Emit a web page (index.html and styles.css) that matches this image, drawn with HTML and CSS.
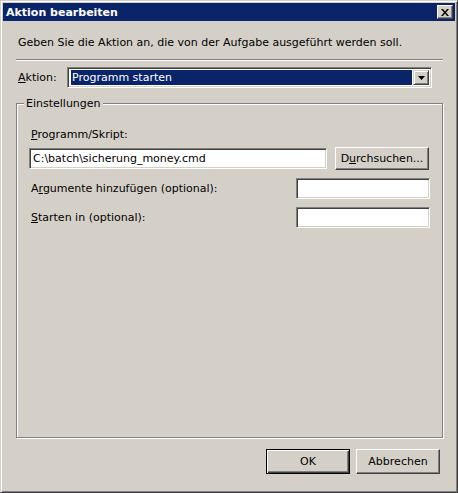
FILE: index.html
```html
<!DOCTYPE html>
<html lang="de">
<head>
    <meta charset="UTF-8">
    <title>Aktion bearbeiten</title>
    <link rel="stylesheet" href="styles.css">
</head>
<body>
    <div class="window">
        <div class="titlebar">
            <span class="title">Aktion bearbeiten</span>
            <button class="close-btn" aria-label="Schließen">
                <svg width="8" height="7" viewBox="0 0 8 7">
                    <path d="M0 0h2l2 2.5L6 0h2L5 3.5 8 7H6L4 4.5 2 7H0l3-3.5z" fill="#000"/>
                </svg>
            </button>
        </div>

        <div class="content">
            <p class="intro">Geben Sie die Aktion an, die von der Aufgabe ausgeführt werden soll.</p>
            <div class="separator"></div>

            <div class="action-row">
                <label class="action-label"><u>A</u>ktion:</label>
                <div class="combo">
                    <div class="combo-value">Programm starten</div>
                    <div class="combo-arrow">
                        <svg width="7" height="4" viewBox="0 0 7 4"><path d="M0 0h7L3.5 4z" fill="#000"/></svg>
                    </div>
                </div>
            </div>

            <div class="group">
                <span class="legend">Einstellungen</span>

                <div class="field-label"><u>P</u>rogramm/Skript:</div>
                <div class="program-row">
                    <div class="textbox wide">C:\batch\sicherung_money.cmd</div>
                    <button class="btn browse">D<u>u</u>rchsuchen...</button>
                </div>

                <div class="option-row">
                    <span>A<u>r</u>gumente hinzufügen (optional):</span>
                    <div class="textbox small"></div>
                </div>
                <div class="option-row">
                    <span><u>S</u>tarten in (optional):</span>
                    <div class="textbox small"></div>
                </div>
            </div>

            <div class="footer">
                <button class="btn default">OK</button>
                <button class="btn">Abbrechen</button>
            </div>
        </div>
    </div>
</body>
</html>
```

FILE: styles.css
```css
body {
    margin: 0;
    background: #d4d0c8;
    font-family: Tahoma, "DejaVu Sans", sans-serif;
    font-size: 11px;
    color: #000;
}

u {
    text-decoration: underline;
    text-underline-offset: 1px;
}

.window {
    width: 458px;
    height: 493px;
    box-sizing: border-box;
    background: #d4d0c8;
    border: 1px solid;
    border-color: #d4d0c8 #404040 #404040 #d4d0c8;
    box-shadow: inset 1px 1px 0 #fff, inset -1px -1px 0 #808080;
    padding: 2px;
    display: flex;
    flex-direction: column;
}

.titlebar {
    height: 18px;
    background: #0a246a;
    display: flex;
    align-items: center;
    justify-content: space-between;
    padding: 0 2px 0 3px;
}

.title {
    color: #fff;
    font-weight: bold;
    font-size: 11px;
}

.close-btn {
    width: 16px;
    height: 14px;
    padding: 0;
    background: #d4d0c8;
    border: 1px solid;
    border-color: #fff #404040 #404040 #fff;
    box-shadow: inset -1px -1px 0 #808080;
    display: flex;
    align-items: center;
    justify-content: center;
}

.content {
    flex: 1;
    display: flex;
    flex-direction: column;
    padding: 0 12px 0 13px;
}

.intro {
    margin: 15px 0 0 2px;
    line-height: 13px;
}

.separator {
    margin-top: 10px;
    height: 1px;
    background: #808080;
    border-bottom: 1px solid #fff;
}

.action-row {
    display: flex;
    align-items: center;
    margin-top: 6px;
}

.action-label {
    width: 49px;
    padding-left: 2px;
}

.combo {
    width: 365px;
    height: 21px;
    box-sizing: border-box;
    background: #fff;
    border: 1px solid;
    border-color: #808080 #fff #fff #808080;
    box-shadow: inset 1px 1px 0 #404040, inset -1px -1px 0 #d4d0c8;
    padding: 2px 2px 2px 3px;
    display: flex;
}

.combo-value {
    flex: 1;
    background: #0a246a;
    color: #fff;
    line-height: 15px;
    padding-left: 1px;
    margin-right: 1px;
}

.combo-arrow {
    width: 16px;
    box-sizing: border-box;
    border: 1px solid;
    border-color: #d4d0c8 #404040 #404040 #d4d0c8;
    box-shadow: inset 1px 1px 0 #fff, inset -1px -1px 0 #808080;
    background: #d4d0c8;
    display: flex;
    align-items: center;
    justify-content: center;
}

.group {
    position: relative;
    margin-top: 15px;
    height: 335px;
    border: 1px solid #808080;
    box-shadow: inset 1px 1px 0 #fff, 1px 1px 0 #fff;
    padding: 24px 12px 0 12px;
    box-sizing: border-box;
}

.legend {
    position: absolute;
    top: -7px;
    left: 7px;
    padding: 0 2px;
    background: #d4d0c8;
    line-height: 13px;
}

.field-label {
    padding-left: 2px;
}

.program-row {
    display: flex;
    align-items: center;
    gap: 8px;
    margin-top: 6px;
}

.textbox {
    height: 21px;
    box-sizing: border-box;
    background: #fff;
    border: 1px solid;
    border-color: #808080 #fff #fff #808080;
    box-shadow: inset 1px 1px 0 #404040, inset -1px -1px 0 #d4d0c8;
    padding: 3px 2px 0 3px;
    line-height: 14px;
}

.textbox.wide {
    width: 298px;
}

.textbox.small {
    width: 134px;
}

.option-row {
    display: flex;
    align-items: center;
    justify-content: space-between;
    margin-top: 8px;
    padding-left: 2px;
}

.btn {
    font-family: inherit;
    font-size: 11px;
    color: #000;
    background: #d4d0c8;
    height: 23px;
    padding: 0;
    border: 1px solid;
    border-color: #fff #404040 #404040 #fff;
    box-shadow: inset -1px -1px 0 #808080;
}

.browse {
    width: 94px;
}

.footer {
    display: flex;
    justify-content: flex-end;
    gap: 6px;
    margin-top: 11px;
    padding-right: 3px;
}

.footer .btn {
    width: 84px;
    height: 25px;
}

.btn.default {
    border: 1px solid #000;
    box-shadow: inset 1px 1px 0 #fff, inset -1px -1px 0 #404040, inset -2px -2px 0 #808080;
}
```
